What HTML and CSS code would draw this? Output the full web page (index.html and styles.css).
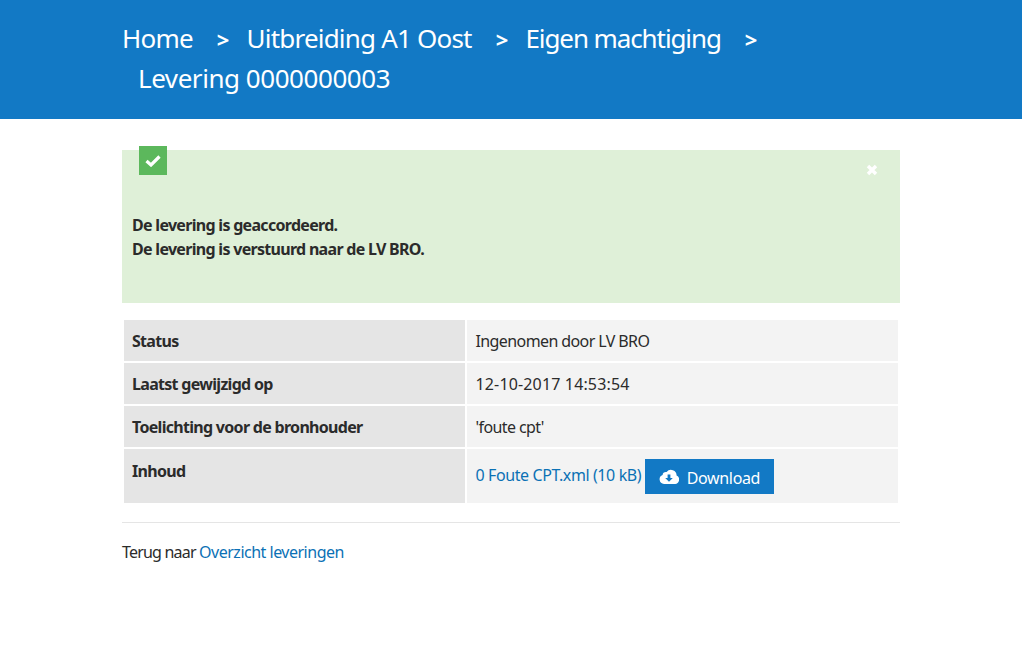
FILE: index.html
```html
<!DOCTYPE html>
<html lang="nl">
<head>
  <meta charset="UTF-8">
  <title>Levering 0000000003</title>
  <link rel="stylesheet" href="styles.css">
</head>
<body>

  <header class="page-header">
    <nav class="crumbs">
      <a href="#">Home</a><span class="sep">&gt;</span><a href="#">Uitbreiding A1 Oost</a><span class="sep">&gt;</span><a href="#" class="crumb-tight">Eigen machtiging</a><span class="sep">&gt;</span>
      <span class="crumb-last">Levering 0000000003</span>
    </nav>
  </header>

  <main class="content">
    <div class="alert">
      <span class="alert-icon">
        <svg width="16" height="13" viewBox="0 0 16 13"><path d="M1.5 7 L6 11 L14.5 2.5" fill="none" stroke="#fff" stroke-width="3.2"/></svg>
      </span>
      <svg class="alert-close" width="12" height="12" viewBox="0 0 12 12"><path d="M2 2 L10 10 M10 2 L2 10" fill="none" stroke="#fff" stroke-width="3.4"/></svg>
      <p>De levering is geaccordeerd.<br>De levering is verstuurd naar de LV BRO.</p>
    </div>

    <table class="details">
      <tr><th>Status</th><td>Ingenomen door LV BRO</td></tr>
      <tr><th>Laatst gewijzigd op</th><td class="cell-date">12-10-2017 14:53:54</td></tr>
      <tr><th>Toelichting voor de bronhouder</th><td>'foute cpt'</td></tr>
      <tr class="row-file">
        <th>Inhoud</th>
        <td>
          <a href="#" class="file-link">0 Foute CPT.xml (10 kB)</a>
          <a href="#" class="btn-download">
            <svg width="20" height="15" viewBox="0 0 20 15"><path fill="#fff" d="M5 15 A4.6 4.6 0 0 1 3.6 6.1 A3.3 3.3 0 0 1 7.6 3 A5.6 5.6 0 0 1 17.6 6.6 A4.4 4.4 0 0 1 15.6 15 Z"/><path fill="#1279c5" d="M8.6 5.5 H11.4 V9 H13.8 L10 12.8 L6.2 9 H8.6 Z"/></svg>
            <span class="btn-label">Download</span>
          </a>
        </td>
      </tr>
    </table>

    <hr class="divider">

    <p class="back">Terug naar <a href="#">Overzicht leveringen</a></p>
  </main>

</body>
</html>
```

FILE: styles.css
```css
html {
  height: 100%;
  background: #fff;
}
body {
  margin: 0;
  margin-right: 2px;
  font-family: "Noto Sans", "Open Sans", sans-serif;
  font-size: 16px;
  line-height: 24px;
  letter-spacing: -0.6px;
  color: #2b2b2b;
}
a {
  color: #0b71b5;
  text-decoration: none;
}
.page-header {
  height: 119px;
  background: #1279c5;
  padding: 18px 122px 0;
  box-sizing: border-box;
}
.crumbs {
  width: 680px;
  font-size: 26px;
  line-height: 40px;
  letter-spacing: -0.8px;
  color: #fff;
}
.crumbs a {
  color: #fff;
}
.crumbs .crumb-tight {
  letter-spacing: -1.1px;
}
.sep {
  margin: 0 18px 0 24px;
  font-size: 22px;
  line-height: 1;
  font-weight: 700;
}
.crumb-last {
  display: block;
  padding-left: 16px;
  letter-spacing: -0.45px;
}
.content {
  width: 778px;
  margin-left: 122px;
  padding-top: 31px;
}
.alert {
  position: relative;
  height: 153px;
  box-sizing: border-box;
  padding: 63px 10px 0;
  background: #dff0d8;
  font-weight: 700;
  letter-spacing: -0.7px;
}
.alert p {
  margin: 0;
}
.alert-icon {
  position: absolute;
  top: -4px;
  left: 17px;
  display: flex;
  justify-content: center;
  align-items: center;
  width: 28px;
  height: 29px;
  background: #5cb85c;
}
.alert-close {
  position: absolute;
  top: 14px;
  right: 22px;
}
.details {
  width: 778px;
  margin-top: 15px;
  border-collapse: separate;
  border-spacing: 2px;
  table-layout: fixed;
}
.details th {
  width: 341px;
  height: 41px;
  box-sizing: border-box;
  padding: 0 8px;
  background: #e5e5e5;
  text-align: left;
  font-weight: 700;
  letter-spacing: -0.7px;
}
.details td {
  padding: 0 8.5px;
  background: #f3f3f3;
}
.details .cell-date {
  letter-spacing: 0.15px;
}
.row-file th {
  height: 54px;
  padding-bottom: 10px;
}
.file-link {
  letter-spacing: -0.4px;
}
.btn-download {
  display: inline-flex;
  align-items: center;
  gap: 8px;
  height: 35px;
  padding: 0 14px;
  background: #1279c5;
  color: #fff;
  letter-spacing: -0.35px;
  vertical-align: middle;
}
.btn-label {
  padding-top: 3px;
}
.divider {
  height: 1px;
  margin: 17px 0 0;
  border: 0;
  background: #e5e5e5;
}
.back {
  margin: 17px 0 0;
  letter-spacing: -0.8px;
}
.back a {
  letter-spacing: -0.5px;
}
```
